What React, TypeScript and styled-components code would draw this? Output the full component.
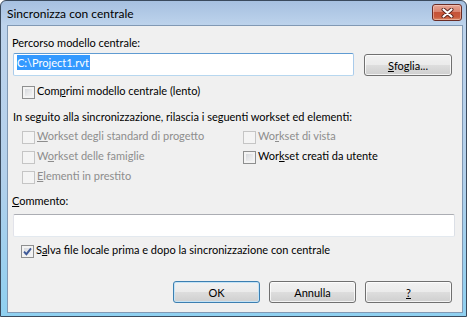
import React from 'react'
import styled, { createGlobalStyle, css } from 'styled-components'

const GlobalStyle = createGlobalStyle`
  html, body {
    margin: 0;
    padding: 0;
    background: #ffffff;
  }
  body {
    font-family: Lato, "Noto Sans", sans-serif;
    font-size: 11px;
    color: #000000;
  }
  * {
    box-sizing: border-box;
  }
`

const Window = styled.div`
  width: 467px;
  height: 317px;
  display: flex;
  flex-direction: column;
  padding: 0 3px 3px 6px;
  border: 1px solid #3a4a5d;
  border-radius: 6px 6px 0 0;
  background: linear-gradient(to bottom, #a6c0e0 0px, #bdd3ec 24px, #b3d0eb 55%, #8fd0f0 100%);
  overflow: hidden;
`

const TitleBar = styled.div`
  height: 24px;
  display: flex;
  justify-content: space-between;
  align-items: flex-start;
`

const TitleText = styled.div`
  margin-top: 5px;
  font-size: 12px;
  line-height: 15px;
  color: #000000;
`

const CloseButton = styled.div`
  width: 30px;
  height: 17px;
  margin: 3px 1px 0 0;
  display: flex;
  align-items: center;
  justify-content: center;
  border: 1px solid #6a2c25;
  border-radius: 3px;
  background: linear-gradient(to bottom, #e7a695 0%, #d98470 45%, #c55338 50%, #c9593c 80%, #d98a66 100%);
  box-shadow: inset 0 0 0 1px rgba(255, 225, 215, 0.45);
`

const Client = styled.div`
  flex: 1;
  display: flex;
  flex-direction: column;
  padding: 9px 0 0 4px;
  border: 1px solid #8199b4;
  background: #f0f0f0;
`

const Label = styled.div<{ $top?: number; $left?: number }>`
  margin: ${(p) => p.$top ?? 0}px 0 0 ${(p) => p.$left ?? 0}px;
  line-height: 15px;
  white-space: nowrap;
`

const Key = styled.span`
  text-decoration: underline;
  text-underline-offset: 1px;
  text-decoration-thickness: 1px;
`

const PathRow = styled.div`
  margin: 3px 0 0 1px;
  display: flex;
  align-items: flex-start;
  gap: 10px;
`

const fieldBase = css`
  height: 23px;
  background: #ffffff;
  border: 1px solid;
  border-radius: 2px;
`

const PathInput = styled.div`
  ${fieldBase}
  width: 341px;
  padding: 1px 0 0 3px;
  border-color: #5f9bd2 #a9cbeb #b7d7ef #a9cbeb;
`

const Selection = styled.span`
  display: inline-block;
  line-height: 15px;
  background: #3399ff;
  color: #ffffff;
  padding-right: 1px;
`

const CommentInput = styled.div`
  ${fieldBase}
  width: 442px;
  margin: 6px 0 0 1px;
  border-color: #abadb3 #dbdfe6 #e3e9ef #e2e3ea;
`

const Button = styled.div<{ $default?: boolean; $width: number; $top?: number }>`
  width: ${(p) => p.$width}px;
  height: 22px;
  margin-top: ${(p) => p.$top ?? 0}px;
  display: flex;
  align-items: center;
  justify-content: center;
  line-height: 15px;
  border: 1px solid ${(p) => (p.$default ? '#3c7fb1' : '#707070')};
  border-radius: 3px;
  background: linear-gradient(to bottom, #f2f2f2 0%, #ebebeb 48%, #dddddd 52%, #cfcfcf 100%);
  box-shadow: inset 0 0 0 1px ${(p) => (p.$default ? '#c4e3f6' : 'rgba(255, 255, 255, 0.75)')};
`

const CheckRow = styled.div<{ $top?: number; $left: number }>`
  margin: ${(p) => p.$top ?? 0}px 0 0 ${(p) => p.$left}px;
  height: 13px;
  display: flex;
  align-items: flex-start;
  gap: 2px;
`

const Box = styled.span<{ $disabled?: boolean }>`
  width: 13px;
  height: 13px;
  flex: none;
  display: flex;
  align-items: center;
  justify-content: center;
  border: 1px solid ${(p) => (p.$disabled ? '#c5c5c5' : '#8e8f8f')};
  background: ${(p) =>
    p.$disabled ? '#f4f4f4' : 'linear-gradient(135deg, #cdd1d6 0%, #e6e7e9 50%, #f8f8f8 100%)'};
  box-shadow: inset 0 0 0 2px ${(p) => (p.$disabled ? '#f4f4f4' : '#f3f3f3')};
`

const CheckText = styled.span<{ $disabled?: boolean }>`
  margin-top: -2px;
  line-height: 13px;
  white-space: nowrap;
  color: ${(p) => (p.$disabled ? '#8d8d8d' : '#000000')};
`

const WorksetGrid = styled.div`
  margin: 7px 0 0 10px;
  display: grid;
  grid-template-columns: 221px auto;
  grid-auto-rows: 13px;
  row-gap: 7px;
`

const ButtonBar = styled.div`
  margin-top: 23px;
  padding-right: 10px;
  display: flex;
  justify-content: flex-end;
  gap: 9px;
`

function CloseGlyph() {
  return (
    <svg width="13" height="10" viewBox="0 0 13 10">
      <path d="M2.5 1.5 L10.5 8.5 M10.5 1.5 L2.5 8.5" stroke="#5a241d" strokeWidth="4" strokeLinecap="round" />
      <path d="M2.5 1.5 L10.5 8.5 M10.5 1.5 L2.5 8.5" stroke="#ffffff" strokeWidth="2.2" strokeLinecap="round" />
    </svg>
  )
}

function CheckMark() {
  return (
    <svg width="9" height="9" viewBox="0 0 9 9">
      <path d="M1 4.6 L3.4 7.2 L8 1.4" fill="none" stroke="#3f5a98" strokeWidth="1.9" />
    </svg>
  )
}

type Mnemonic = { before: string; key: string; after: string }

function Caption({ text }: { text: Mnemonic }) {
  return (
    <>
      {text.before}
      <Key>{text.key}</Key>
      {text.after}
    </>
  )
}

function Check({
  text,
  disabled,
  checked,
}: {
  text: Mnemonic
  disabled?: boolean
  checked?: boolean
}) {
  return (
    <>
      <Box $disabled={disabled}>{checked && <CheckMark />}</Box>
      <CheckText $disabled={disabled}>
        <Caption text={text} />
      </CheckText>
    </>
  )
}

const worksets: { text: Mnemonic; disabled: boolean }[] = [
  { text: { before: '', key: 'W', after: 'orkset degli standard di progetto' }, disabled: true },
  { text: { before: 'Wo', key: 'r', after: 'kset di vista' }, disabled: true },
  { text: { before: 'W', key: 'o', after: 'rkset delle famiglie' }, disabled: true },
  { text: { before: 'Wor', key: 'k', after: 'set creati da utente' }, disabled: false },
  { text: { before: '', key: 'E', after: 'lementi in prestito' }, disabled: true },
]

export default function App() {
  return (
    <>
      <GlobalStyle />
      <Window>
        <TitleBar>
          <TitleText>Sincronizza con centrale</TitleText>
          <CloseButton>
            <CloseGlyph />
          </CloseButton>
        </TitleBar>
        <Client>
          <Label>Percorso modello centrale:</Label>
          <PathRow>
            <PathInput>
              <Selection>C:\Project1.rvt</Selection>
            </PathInput>
            <Button $width={88} $top={1}>
              <Caption text={{ before: '', key: 'S', after: 'foglia...' }} />
            </Button>
          </PathRow>
          <CheckRow $top={10} $left={10}>
            <Check text={{ before: 'Com', key: 'p', after: 'rimi modello centrale (lento)' }} />
          </CheckRow>
          <Label $top={10} $left={1}>
            In seguito alla sincronizzazione, rilascia i seguenti workset ed elementi:
          </Label>
          <WorksetGrid>
            {worksets.map((w) => (
              <CheckRow key={w.text.before + w.text.key + w.text.after} $left={0}>
                <Check text={w.text} disabled={w.disabled} />
              </CheckRow>
            ))}
          </WorksetGrid>
          <Label $top={9}>
            <Caption text={{ before: '', key: 'C', after: 'ommento:' }} />
          </Label>
          <CommentInput />
          <CheckRow $top={8} $left={9}>
            <Check
              checked
              text={{ before: 'S', key: 'a', after: 'lva file locale prima e dopo la sincronizzazione con centrale' }}
            />
          </CheckRow>
          <ButtonBar>
            <Button $default $width={87}>
              OK
            </Button>
            <Button $width={87}>Annulla</Button>
            <Button $width={87}>
              <Key>?</Key>
            </Button>
          </ButtonBar>
        </Client>
      </Window>
    </>
  )
}
